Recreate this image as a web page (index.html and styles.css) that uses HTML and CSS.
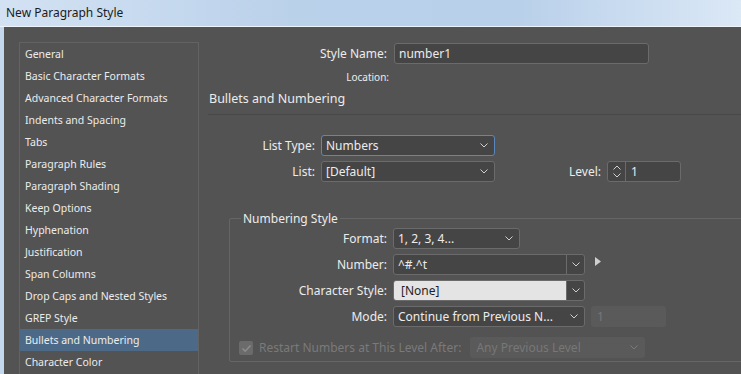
FILE: index.html
```html
<!DOCTYPE html>
<html lang="en">
<head>
    <meta charset="UTF-8">
    <meta name="viewport" content="width=device-width, initial-scale=1.0">
    <title>New Paragraph Style</title>
    <link rel="stylesheet" href="styles.css">
</head>
<body>
    <div class="titlebar">New Paragraph Style</div>

    <div class="dialog">
        <ul class="categories">
            <li>General</li>
            <li>Basic Character Formats</li>
            <li>Advanced Character Formats</li>
            <li>Indents and Spacing</li>
            <li>Tabs</li>
            <li>Paragraph Rules</li>
            <li>Paragraph Shading</li>
            <li>Keep Options</li>
            <li>Hyphenation</li>
            <li>Justification</li>
            <li>Span Columns</li>
            <li>Drop Caps and Nested Styles</li>
            <li>GREP Style</li>
            <li class="active">Bullets and Numbering</li>
            <li>Character Color</li>
        </ul>

        <main class="pane">
            <div class="row">
                <label class="lbl lbl-name">Style Name:</label>
                <div class="field name-field">number1</div>
            </div>
            <div class="location">Location:</div>
            <h2 class="section-title">Bullets and Numbering</h2>

            <div class="list-rows">
                <div class="row">
                    <label class="lbl lbl-list">List Type:</label>
                    <div class="select focused list-select">
                        <span>Numbers</span>
                        <svg class="chev" width="8" height="5" viewBox="0 0 8 5"><path d="M0.5 0.5L4 4L7.5 0.5"/></svg>
                    </div>
                </div>
                <div class="row">
                    <label class="lbl lbl-list">List:</label>
                    <div class="select list-select">
                        <span>[Default]</span>
                        <svg class="chev" width="8" height="5" viewBox="0 0 8 5"><path d="M0.5 0.5L4 4L7.5 0.5"/></svg>
                    </div>
                    <label class="lbl level-lbl">Level:</label>
                    <div class="spinner">
                        <div class="spin-btns">
                            <svg width="8" height="5" viewBox="0 0 8 5"><path d="M0.5 4.5L4 1L7.5 4.5"/></svg>
                            <svg width="8" height="5" viewBox="0 0 8 5"><path d="M0.5 0.5L4 4L7.5 0.5"/></svg>
                        </div>
                        <span class="spin-value">1</span>
                    </div>
                </div>
            </div>

            <fieldset class="group">
                <legend>Numbering Style</legend>
                <div class="group-rows">
                    <div class="row">
                        <label class="lbl lbl-group">Format:</label>
                        <div class="select format-select">
                            <span>1, 2, 3, 4...</span>
                            <svg class="chev" width="8" height="5" viewBox="0 0 8 5"><path d="M0.5 0.5L4 4L7.5 0.5"/></svg>
                        </div>
                    </div>
                    <div class="row">
                        <label class="lbl lbl-group">Number:</label>
                        <div class="combo">
                            <span class="combo-text">^#.^t</span>
                            <span class="combo-btn"><svg class="chev" width="8" height="5" viewBox="0 0 8 5"><path d="M0.5 0.5L4 4L7.5 0.5"/></svg></span>
                        </div>
                        <svg class="flyout" width="6" height="9" viewBox="0 0 6 9"><path d="M0 0L6 4.5L0 9Z"/></svg>
                    </div>
                    <div class="row">
                        <label class="lbl lbl-group">Character Style:</label>
                        <div class="combo">
                            <span class="combo-text light">[None]</span>
                            <span class="combo-btn"><svg class="chev" width="8" height="5" viewBox="0 0 8 5"><path d="M0.5 0.5L4 4L7.5 0.5"/></svg></span>
                        </div>
                    </div>
                    <div class="row">
                        <label class="lbl lbl-group">Mode:</label>
                        <div class="select mode-select">
                            <span>Continue from Previous N...</span>
                            <svg class="chev" width="8" height="5" viewBox="0 0 8 5"><path d="M0.5 0.5L4 4L7.5 0.5"/></svg>
                        </div>
                        <div class="field disabled mode-start">1</div>
                    </div>
                    <div class="row restart-row">
                        <span class="checkbox">
                            <svg width="11" height="9" viewBox="0 0 11 9"><path d="M1.5 4.5L4.2 7.2L9.5 1.5"/></svg>
                        </span>
                        <label class="restart-lbl">Restart Numbers at This Level After:</label>
                        <div class="select disabled restart-select">
                            <span>Any Previous Level</span>
                            <svg class="chev" width="8" height="5" viewBox="0 0 8 5"><path d="M0.5 0.5L4 4L7.5 0.5"/></svg>
                        </div>
                    </div>
                </div>
            </fieldset>
        </main>
    </div>
</body>
</html>
```

FILE: styles.css
```css
* {
    margin: 0;
    padding: 0;
    box-sizing: border-box;
}

body {
    width: 741px;
    height: 374px;
    overflow: hidden;
    font-family: "Noto Sans", "Open Sans", sans-serif;
    font-size: 12px;
    color: #ececec;
    background: #c3d7ed;
}

.titlebar {
    height: 27px;
    padding: 4px 0 0 6px;
    line-height: 18px;
    color: #1b1b1b;
    background: linear-gradient(90deg, #d3e2f3, #bad1ea 40%, #b9d0ea 70%, #dbe8f6);
    border-bottom: 1px solid #eef4fa;
}

.dialog {
    display: flex;
    height: 347px;
    margin-left: 4px;
    padding: 15px 0 0 15px;
    background: #535353;
}

/* category list */
.categories {
    list-style: none;
    width: 180px;
    flex-shrink: 0;
    border: 1px solid #636363;
    border-bottom: none;
    font-size: 10.5px;
    color: #ececec;
}

.categories li {
    height: 22px;
    line-height: 22px;
    padding-left: 5px;
    white-space: nowrap;
}

.categories li.active {
    background: #4c6a87;
}

/* right pane */
.pane {
    flex: 1;
    min-width: 0;
    margin-left: 9px;
    padding-top: 1px;
    overflow: hidden;
}

.row {
    display: flex;
    align-items: center;
}

.lbl {
    flex-shrink: 0;
    text-align: right;
    white-space: nowrap;
}

.lbl-name {
    width: 179px;
    margin-right: 7px;
}

.lbl-list {
    width: 107px;
    margin-right: 6px;
}

.lbl-group {
    width: 157px;
    margin-right: 6px;
}

.field, .select, .spinner, .combo {
    height: 21px;
    border: 1px solid #6b6b6b;
    border-radius: 3px;
    background: #454545;
    white-space: nowrap;
}

.field {
    padding-left: 4px;
    line-height: 19px;
}

.name-field {
    width: 255px;
}

.location {
    width: 181px;
    margin-top: 4px;
    height: 18px;
    line-height: 18px;
    text-align: right;
    font-size: 10px;
}

.section-title {
    margin-top: 4px;
    padding: 0 0 6px 1px;
    line-height: 18px;
    font-size: 12.5px;
    font-weight: normal;
    border-bottom: 1px solid #484848;
}

.select {
    display: flex;
    align-items: center;
    justify-content: space-between;
    padding: 0 6px 0 4px;
}

.chev {
    flex-shrink: 0;
}

svg path {
    fill: none;
    stroke: #d0d0d0;
    stroke-width: 1;
}

.select.focused {
    border-color: #5a88bd;
}

.list-rows {
    display: flex;
    flex-direction: column;
    gap: 5px;
    margin-top: 20px;
}

.list-select {
    width: 174px;
}

.level-lbl {
    margin: 0 6px 0 74px;
}

.spinner {
    display: flex;
    width: 74px;
}

.spin-btns {
    width: 18px;
    display: flex;
    flex-direction: column;
    align-items: center;
    justify-content: center;
    gap: 3px;
    border-right: 1px solid #6b6b6b;
}

.spin-value {
    padding-left: 5px;
    line-height: 19px;
}

/* numbering style group */
.group {
    width: 560px;
    margin: 28px 0 0 21px;
    padding: 0 0 3px 0;
    border: 1px solid #666;
    border-radius: 2px;
}

.group legend {
    margin-left: 11px;
    padding: 0 2px;
    line-height: 17px;
    font-size: 12px;
}

.group-rows {
    display: flex;
    flex-direction: column;
    gap: 5px;
    padding-top: 1px;
}

.format-select {
    width: 127px;
}

.combo {
    display: flex;
    width: 192px;
    overflow: hidden;
}

.combo-text {
    flex: 1;
    padding-left: 4px;
    line-height: 19px;
}

.combo-text.light {
    background: #e4e4e4;
    color: #1f1f1f;
    padding-left: 7px;
}

.combo-btn {
    width: 18px;
    display: flex;
    align-items: center;
    justify-content: center;
    border-left: 1px solid #6b6b6b;
}

.flyout {
    margin: -6px 0 0 10px;
}

.flyout path {
    fill: #cfcfcf;
    stroke: none;
}

.mode-select {
    width: 192px;
}

.disabled {
    border-color: transparent;
    background: #5a5a5a;
    color: #777;
}

.disabled svg path {
    stroke: #7a7a7a;
}

.mode-start {
    width: 75px;
    margin-left: 6px;
    padding-left: 5px;
}

.restart-row {
    margin-top: 5px;
    padding-left: 9px;
}

.checkbox {
    width: 14px;
    height: 14px;
    display: flex;
    align-items: center;
    justify-content: center;
    border-radius: 2px;
    background: #6b6b6b;
    margin-top: 1px;
}

.checkbox path {
    stroke: #8c8c8c;
    stroke-width: 1.6;
}

.restart-lbl {
    margin-left: 6px;
    color: #7a7a7a;
    white-space: nowrap;
}

.restart-select {
    width: 175px;
    margin-left: 9px;
    padding-left: 5px;
}
```
